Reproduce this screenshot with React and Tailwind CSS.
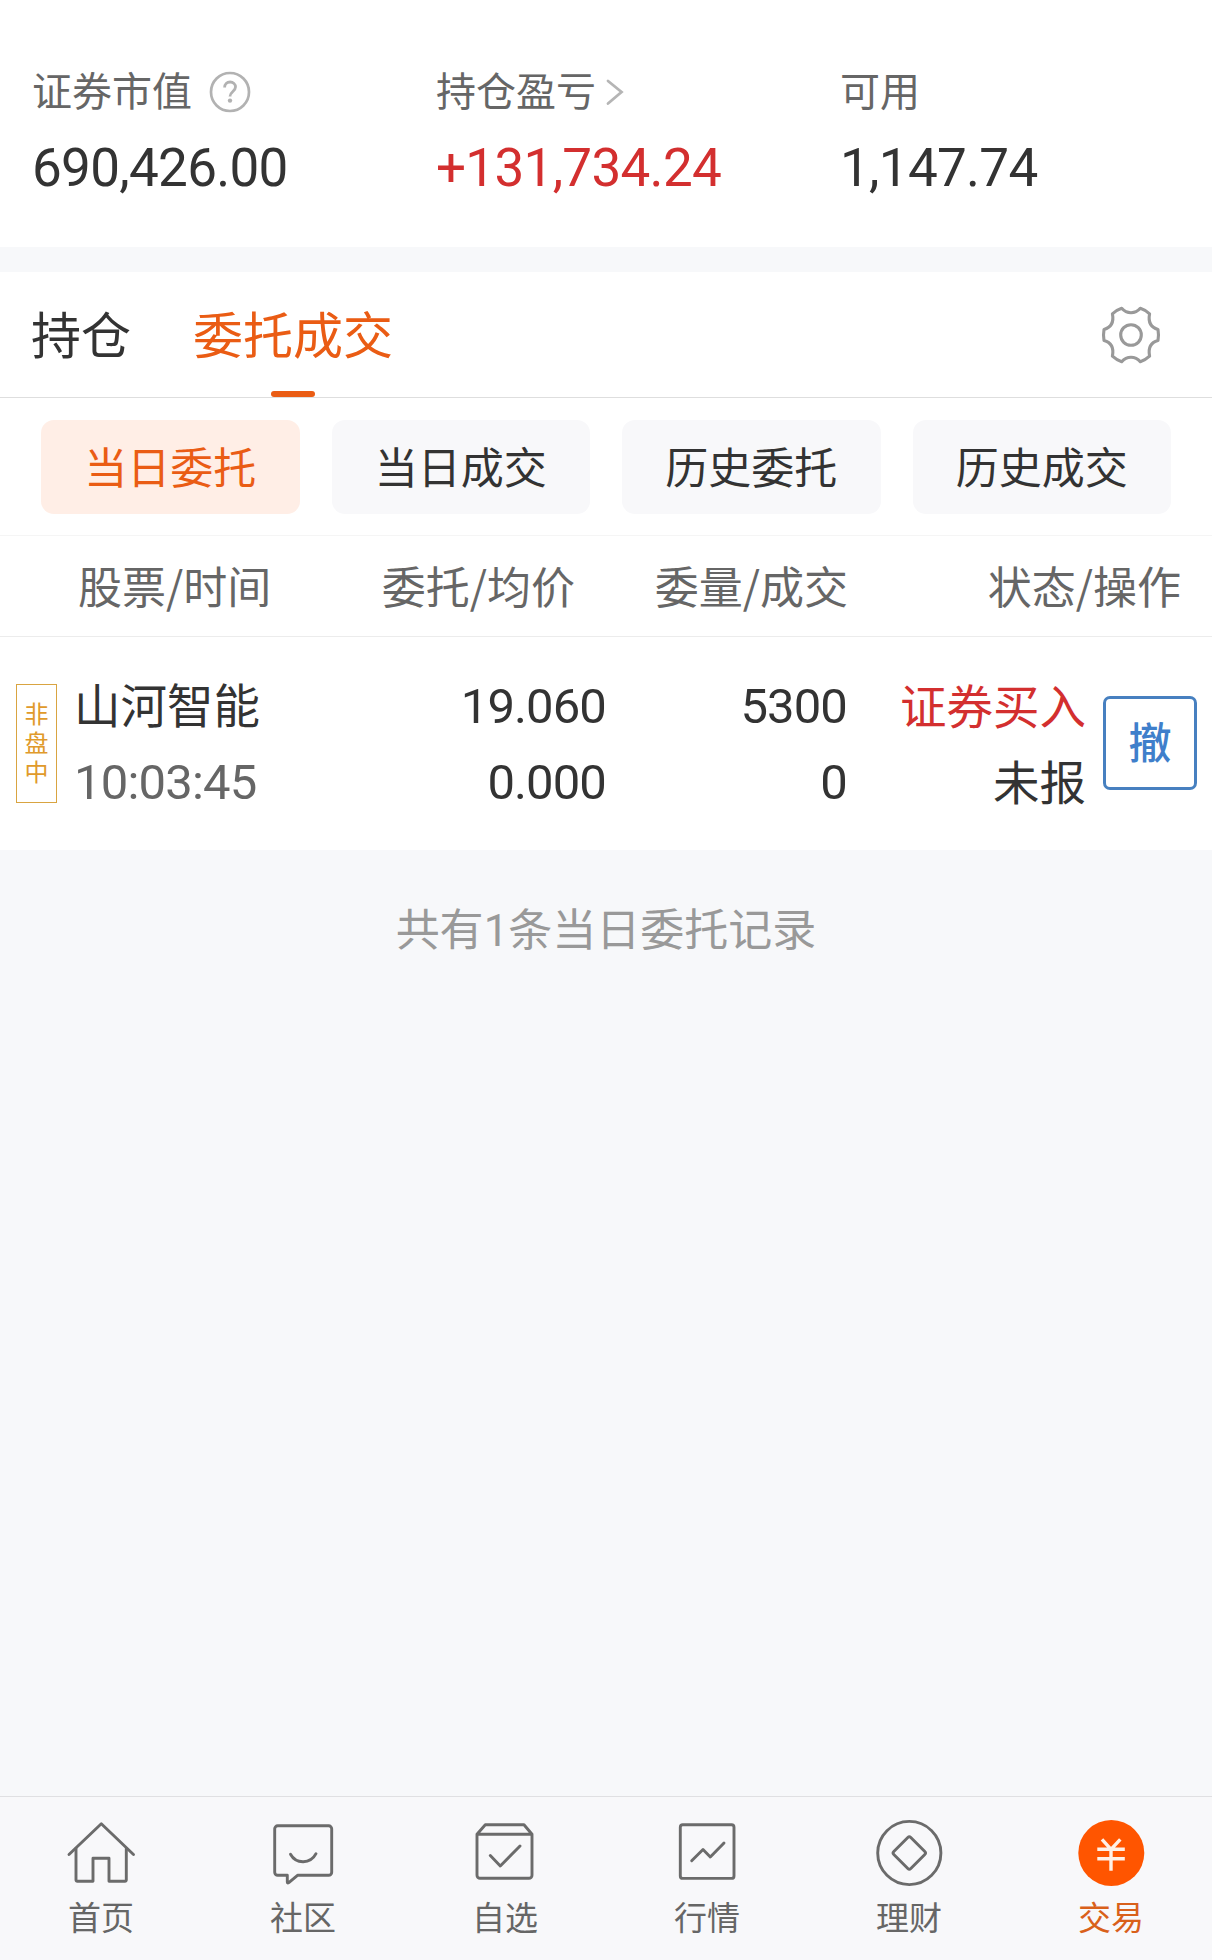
import React from 'react';
import clsx from 'clsx';

const SUMMARY = [
  { label: '证券市值', value: '690,426.00', icon: 'help' },
  {
    label: '持仓盈亏',
    value: '+131,734.24',
    icon: 'arrow',
    red: true
  },
  { label: '可用', value: '1,147.74' }
];

const FILTERS = ['当日委托', '当日成交', '历史委托', '历史成交'];

const ORDERS = [
  {
    id: 1,
    tag: '非盘中',
    name: '山河智能',
    time: '10:03:45',
    price: '19.060',
    avgPrice: '0.000',
    amount: '5300',
    filled: '0',
    side: '证券买入',
    status: '未报'
  }
];

const HelpIcon = () => (
  <svg className="ml-[16px] mt-[6px] size-[44px]" viewBox="0 0 44 44" fill="none">
    <circle cx="22" cy="22" r="19" stroke="#b2b2b2" strokeWidth="2.7" />
    <path
      d="M16.6 17.6c0-3.6 2.4-5.6 5.5-5.6s5.4 2.1 5.4 5c0 4.4-5.5 4.6-5.5 9.5"
      stroke="#b2b2b2"
      strokeWidth="2.8"
    />
    <circle cx="22" cy="30.6" r="2.2" fill="#b2b2b2" />
  </svg>
);

const ArrowIcon = () => (
  <svg className="ml-[9px] mt-[6px] h-[30px] w-[20px]" viewBox="0 0 20 30" fill="none">
    <path
      d="M3 4l13.5 11L3 26.5"
      stroke="#b5b5b5"
      strokeWidth="2.8"
      strokeLinecap="round"
    />
  </svg>
);

const GearIcon = () => (
  <svg className="size-[62px]" viewBox="-31 -31 62 62" fill="none" stroke="#999" strokeWidth="3.1">
    <path
      strokeLinejoin="round"
      d="M-9.3 -26.7Q-5.5 -22.3 0 -22.3T9.3 -26.7Q14.5 -25 18.6 -21.2C17 -13 20 -7.5 27 -5.6Q28 0 27 5.6C20 7.5 17 13 18.6 21.2Q14.5 25 9.3 26.7Q5.5 22.3 0 22.3T-9.3 26.7Q-14.5 25 -18.6 21.2C-17 13 -20 7.5 -27 5.6Q-28 0 -27 -5.6C-20 -7.5 -17 -13 -18.6 -21.2Q-14.5 -25 -9.3 -26.7Z"
    />
    <circle r="10.3" />
  </svg>
);

const NavIcon = ({ children }) => (
  <svg
    className="size-[72px]"
    viewBox="0 0 72 72"
    fill="none"
    stroke="#6b6b6b"
    strokeWidth="2.9"
    strokeLinecap="round"
    strokeLinejoin="round"
  >
    {children}
  </svg>
);

const NAV_ITEMS = [
  {
    label: '首页',
    icon: (
      <NavIcon>
        <path d="M4 38.5L36.3 7.7L68.5 38.5" />
        <path d="M11 32.5V64a1.3 1.3 0 0 0 1.3 1.3H28V42.3H44V65.3H60a1.3 1.3 0 0 0 1.3-1.3V32.5" />
      </NavIcon>
    )
  },
  {
    label: '社区',
    icon: (
      <NavIcon>
        <path d="M10.7 9.8H61.7a3 3 0 0 1 3 3V56.3a3 3 0 0 1-3 3H30.5L21.8 66.6q-1.5 1-1.5-.6V59.3H10.7a3 3 0 0 1-3-3V12.8a3 3 0 0 1 3-3Z" />
        <path d="M23.5 38.3C29 48.3 43.5 48.3 49 37.7" />
      </NavIcon>
    )
  },
  {
    label: '自选',
    icon: (
      <NavIcon>
        <path d="M8 18.3L16.3 8.7H55L63 18.3V59.3a3 3 0 0 1-3 3H11a3 3 0 0 1-3-3ZH63" />
        <path d="M21.3 39.5L31.3 50L51 30" />
      </NavIcon>
    )
  },
  {
    label: '行情',
    icon: (
      <NavIcon>
        <rect x="9.3" y="8.7" width="53.7" height="53.7" rx="2.5" />
        <path d="M20.7 44.7L32 33.5L39.3 41L53 27" />
      </NavIcon>
    )
  },
  {
    label: '理财',
    icon: (
      <NavIcon>
        <circle cx="36.3" cy="37" r="31.6" />
        <path d="M34.8 21.5q1.5-1.5 3 0l14 14q1.5 1.5 0 3l-14 14q-1.5 1.5-3 0l-14-14q-1.5-1.5 0-3Z" />
      </NavIcon>
    )
  },
  {
    label: '交易',
    active: true,
    icon: (
      <NavIcon>
        <circle cx="36.3" cy="37" r="33" fill="#ff5500" stroke="none" />
        <path
          d="M27 23.3L36 33.3L45.3 23.3M36 33.3V54.7M22.3 33.3H49.8M22.3 42.7H49.8"
          stroke="#fff0e6"
          strokeWidth="3.4"
          strokeLinecap="butt"
        />
      </NavIcon>
    )
  }
];

const SummaryItem = ({ item }) => (
  <div className="pl-8">
    <div className="flex h-[60px] items-center text-[40px] leading-[60px] text-[#666]">
      <span>{item.label}</span>
      {item.icon === 'help' && <HelpIcon />}
      {item.icon === 'arrow' && <ArrowIcon />}
    </div>
    <p
      className={clsx(
        'mt-[19px] font-[Roboto] text-[53px] leading-[60px] tracking-[-0.7px]',
        item.red ? 'text-[#d32f2f]' : 'text-[#333]'
      )}
    >
      {item.value}
    </p>
  </div>
);

const OrderRow = ({ order }) => (
  <div className="flex h-[213px] items-center bg-white pl-4 text-[#333]">
    <div className="h-[119px] w-[41px] border border-[#d9a441] pt-[17px] text-[24px] leading-[39px] tracking-[5px] text-[#e09a2b] [writing-mode:vertical-rl]">
      {order.tag}
    </div>
    <div className="ml-[17px] w-[241px] text-[46.5px] leading-[76px]">
      <p className="-mt-[2px] h-[76px]">{order.name}</p>
      <p className="mt-[4px] font-[Roboto] text-[49px] tracking-[-0.8px] text-[#666]">
        {order.time}
      </p>
    </div>
    <div className="w-[291px] pt-[3px] text-right font-[Roboto] text-[49px] leading-[76px] tracking-[-0.9px]">
      <p>{order.price}</p>
      <p>{order.avgPrice}</p>
    </div>
    <div className="w-[241px] pt-[3px] text-right font-[Roboto] text-[49px] leading-[76px] tracking-[-0.9px]">
      <p>{order.amount}</p>
      <p>{order.filled}</p>
    </div>
    <div className="w-[239px] pb-[3px] text-right text-[46.5px] leading-[76px]">
      <p className="text-[#d32f2f]">{order.side}</p>
      <p>{order.status}</p>
    </div>
    <button className="mb-[1px] ml-[17px] h-[94px] w-[94px] rounded-[7px] border-3 border-[#4780c0] pb-[5px] text-[43px] leading-none font-medium text-[#3f7fcb]">
      撤
    </button>
  </div>
);

const App = () => {
  return (
    <div className="flex h-[1960px] w-[1212px] flex-col bg-[#f7f8fa] font-['Noto_Sans_CJK_SC',sans-serif]">
      <section className="grid h-[247px] grid-cols-3 bg-white pt-[59px]">
        {SUMMARY.map(item => (
          <SummaryItem key={item.label} item={item} />
        ))}
      </section>

      <section className="mt-[25px] bg-white">
        <div className="flex h-[126px] items-center justify-between border-b border-[#dedede] pr-[50px] pl-[31px]">
          <div className="flex h-full gap-[62px] text-[50px] leading-[120px]">
            <span className="text-[#333]">持仓</span>
            <span className="relative text-[#ea5c14]">
              委托成交
              <span className="absolute bottom-0 left-1/2 h-[6px] w-[44px] -translate-x-1/2 rounded-full bg-[#ea5c14]" />
            </span>
          </div>
          <GearIcon />
        </div>
        <div className="grid h-[138px] grid-cols-4 gap-8 border-b border-[#f5f5f5] px-[41px] pt-[22px]">
          {FILTERS.map((filter, i) => (
            <button
              key={filter}
              className={clsx(
                'h-[94px] rounded-[13px] pb-[3px] text-[43px] leading-none',
                i === 0
                  ? 'bg-[#ffeee6] text-[#ea5c14]'
                  : 'bg-[#f8f8fa] text-[#333]'
              )}
            >
              {filter}
            </button>
          ))}
        </div>
        <div className="flex h-[101px] border-b border-[#ececec] pl-[78px] text-[44px] leading-[98px] text-[#666]">
          <span className="w-[240px]">股票/时间</span>
          <span className="w-[257px] text-right">委托/均价</span>
          <span className="w-[273px] text-right">委量/成交</span>
          <span className="w-[333px] text-right">状态/操作</span>
        </div>
        {ORDERS.map(order => (
          <OrderRow key={order.id} order={order} />
        ))}
      </section>

      <p className="mt-[47px] text-center text-[44px] leading-[60px] text-[#999]">
        共有<span className="font-[Roboto]">{ORDERS.length}</span>
        条当日委托记录
      </p>

      <nav className="mt-auto grid h-[164px] grid-cols-6 border-t border-[#e0e0e2] bg-[#f8f8fa] pt-[19px]">
        {NAV_ITEMS.map(item => (
          <div key={item.label} className="flex flex-col items-center">
            {item.icon}
            <span
              className={clsx(
                'mt-[8px] text-[33px] leading-10',
                item.active ? 'text-[#d9601a]' : 'text-[#666]'
              )}
            >
              {item.label}
            </span>
          </div>
        ))}
      </nav>
    </div>
  );
};

export default App;
